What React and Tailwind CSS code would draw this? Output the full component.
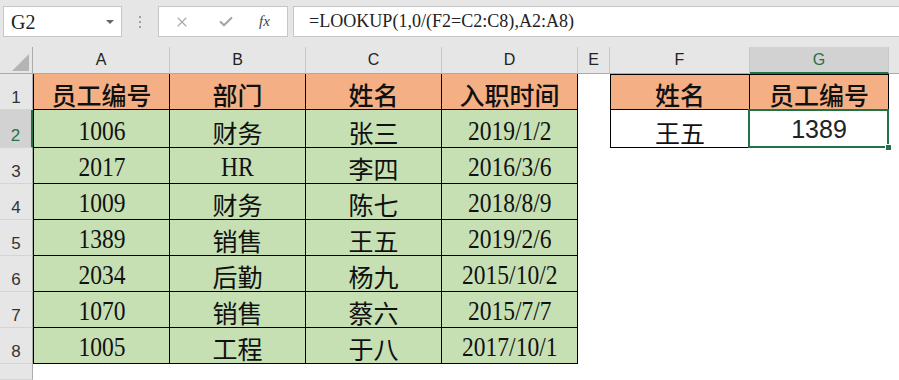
import React from 'react';
import { X, Check } from 'lucide-react';

const data = [
  ['1006', '财务', '张三', '2019/1/2'],
  ['2017', 'HR', '李四', '2016/3/6'],
  ['1009', '财务', '陈七', '2018/8/9'],
  ['1389', '销售', '王五', '2019/2/6'],
  ['2034', '后勤', '杨九', '2015/10/2'],
  ['1070', '销售', '蔡六', '2015/7/7'],
  ['1005', '工程', '于八', '2017/10/1'],
];

const heads = ['员工编号', '部门', '姓名', '入职时间'];
const letters = ['A', 'B', 'C', 'D', 'E', 'F', 'G'];

const isCJK = (s) => /[\u4e00-\u9fff]/.test(s);

const Txt = ({ s, strong }) =>
  isCJK(s) ? (
    <span
      className={`font-['Noto_Sans_CJK_SC',sans-serif] text-[25px] leading-none text-[#111] ${
        strong ? 'font-medium' : 'font-normal'
      }`}
    >
      {s}
    </span>
  ) : (
    <span className="inline-block font-['Liberation_Serif',serif] text-[28px] leading-none text-[#111] scale-x-[0.84]">
      {s}
    </span>
  );

const ColHead = ({ l }) => {
  const sel = l === 'G';
  return (
    <div
      className={`flex items-center justify-center border-r border-[#c8c8c8] font-['Liberation_Sans',sans-serif] text-[16px] ${
        sel
          ? 'bg-[#d2d2d2] text-[#217346] border-b-2 border-b-[#217346]'
          : 'bg-[#e6e6e6] text-[#222] border-b border-b-[#ababab]'
      }`}
    >
      {l}
    </div>
  );
};

const RowHead = ({ n }) => {
  const sel = n === 2;
  return (
    <div
      className={`flex items-end justify-center pb-[3px] border-b border-[#d4d4d4] font-['Liberation_Sans',sans-serif] text-[17px] leading-none ${
        sel
          ? 'bg-[#d2d2d2] text-[#217346] border-r-2 border-r-[#217346]'
          : 'bg-[#e6e6e6] text-[#333] border-r border-r-[#ababab]'
      }`}
    >
      {n < 9 ? n : null}
    </div>
  );
};

const Cell = ({ children, className = '' }) => (
  <div className={`flex items-end justify-center pb-[2px] ${className}`}>{children}</div>
);

const Blank = () => <div className="bg-white" />;

export default function App() {
  const body = [];
  // column header row
  body.push(
    <div key="corner" className="relative bg-[#e6e6e6] border-r border-b border-[#ababab]">
      <div className="absolute right-[3px] bottom-[2px] w-0 h-0 border-l-[17px] border-l-transparent border-b-[17px] border-b-[#b4b4b4]" />
    </div>
  );
  letters.forEach((l) => body.push(<ColHead key={l} l={l} />));
  body.push(<div key="hrest" className="bg-[#e6e6e6] border-b border-[#ababab]" />);

  for (let r = 1; r <= 9; r++) {
    body.push(<RowHead key={`rh${r}`} n={r} />);
    for (let c = 0; c < 4; c++) {
      if (r === 9) {
        body.push(<Blank key={`c${r}${c}`} />);
        continue;
      }
      const text = r === 1 ? heads[c] : data[r - 2][c];
      body.push(
        <Cell
          key={`c${r}${c}`}
          className={`border-r border-b border-black ${c === 0 ? 'border-l' : ''} ${
            r === 1 ? 'bg-[#f4b084]' : 'bg-[#c6e0b4]'
          }`}
        >
          <Txt s={text} strong={r === 1} />
        </Cell>
      );
    }
    body.push(<Blank key={`e${r}`} />);
    if (r === 1) {
      body.push(
        <Cell key="f1" className="bg-[#f4b084] border border-black">
          <Txt s="姓名" strong />
        </Cell>
      );
      body.push(
        <Cell key="g1" className="bg-[#f4b084] border-r border-y border-black">
          <Txt s="员工编号" strong />
        </Cell>
      );
    } else if (r === 2) {
      body.push(
        <Cell key="f2" className="bg-white border-l border-r border-b border-black">
          <Txt s="王五" />
        </Cell>
      );
      body.push(
        <div key="g2" className="relative flex items-end justify-center pb-[5px] bg-white border-r border-b border-black">
          <span className="font-['Liberation_Sans',sans-serif] text-[25px] leading-none text-[#222]">1389</span>
          <div className="absolute left-[-2px] top-[-1px] right-[-1px] bottom-[-1px] border-2 border-[#217346]" />
          <div className="absolute right-[-4px] bottom-[-4px] w-[7px] h-[7px] bg-[#217346] border border-white" />
        </div>
      );
    } else {
      body.push(<Blank key={`f${r}`} />);
      body.push(<Blank key={`g${r}`} />);
    }
    body.push(<Blank key={`x${r}`} />);
  }

  return (
    <div className="w-[899px] h-[380px] overflow-hidden bg-white">
      {/* formula bar */}
      <div className="h-[47px] bg-[#e6e6e6] flex items-start pt-[6px]">
        <div className="ml-[3px] w-[119px] h-[31px] bg-white border border-[#c6c6c6] flex items-center justify-between pl-[7px] pr-[7px]">
          <span className="font-['Liberation_Serif',serif] text-[20px] text-[#222]">G2</span>
          <div className="w-0 h-0 border-x-[4px] border-x-transparent border-t-[4px] border-t-[#666]" />
        </div>
        <div className="w-[36px] h-[31px] flex flex-col items-center justify-center gap-[3px]">
          <div className="w-[2px] h-[2px] bg-[#a0a0a0]" />
          <div className="w-[2px] h-[2px] bg-[#a0a0a0]" />
          <div className="w-[2px] h-[2px] bg-[#a0a0a0]" />
        </div>
        <div className="w-[130px] h-[31px] bg-white border border-[#c6c6c6] flex items-center">
          <X className="ml-[15px] w-[16px] h-[16px] text-[#a6a6a6]" strokeWidth={1.6} />
          <Check className="ml-[28px] w-[16px] h-[16px] text-[#a6a6a6]" strokeWidth={3.2} />
          <span className="ml-[25px] font-['Liberation_Serif',serif] italic text-[15px] text-[#444]">fx</span>
        </div>
        <div className="ml-[5px] flex-1 h-[31px] bg-white border border-[#c6c6c6] border-r-0 flex items-center pl-[15px]">
          <span className="inline-block origin-left font-['Liberation_Serif',serif] text-[19px] text-[#222] scale-x-[0.95]">
            =LOOKUP(1,0/(F2=C2:C8),A2:A8)
          </span>
        </div>
      </div>
      {/* sheet */}
      <div className="grid h-[333px] grid-cols-[33px_137px_136px_136px_136px_32px_140px_139px_1fr] grid-rows-[27px_36px_38px_36px_36px_36px_36px_36px_36px_1fr]">
        {body}
      </div>
    </div>
  );
}
